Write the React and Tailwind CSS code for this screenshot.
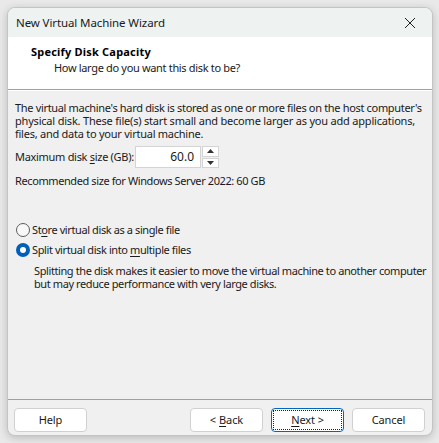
import React from "react";

const font = { fontFamily: '"Noto Sans", "Liberation Sans", sans-serif' };

function Btn({ children, focused }) {
  return (
    <div
      className={`w-[73px] h-[24px] rounded-[4px] bg-white flex items-center justify-center text-[11px] tracking-[-0.1px] text-[#1a1a1a] ${
        focused ? "border border-[#0067c0]" : "border border-[#d0d0d0]"
      }`}
    >
      {focused ? (
        <div className="w-[69px] h-[20px] border border-dotted border-[#222] flex items-center justify-center">
          {children}
        </div>
      ) : (
        children
      )}
    </div>
  );
}

function Radio({ checked }) {
  return checked ? (
    <div className="w-[14px] h-[14px] rounded-full bg-[#005fb8] flex items-center justify-center">
      <div className="w-[6px] h-[6px] rounded-full bg-white" />
    </div>
  ) : (
    <div className="w-[14px] h-[14px] rounded-full border border-[#5c5c5c] bg-[#f8f8f8]" />
  );
}

export default function App() {
  return (
    <div className="w-[439px] h-[443px] bg-[#e9e9e9] pt-[7px] pl-[7px]" style={font}>
      <div className="w-[426px] h-[429px] rounded-[8px] bg-[#f0f0f0] border border-[#c4c4c4] shadow-[0_2px_8px_rgba(0,0,0,0.2)] overflow-hidden flex flex-col">
        {/* Title bar */}
        <div className="h-[29px] bg-[#eef2f1] flex items-center justify-between pl-[8px] pr-[16px] shrink-0">
          <span className="text-[11.5px] tracking-[-0.1px] text-[#1a1a1a]">New Virtual Machine Wizard</span>
          <svg width="12" height="12" viewBox="0 0 12 12">
            <path d="M1 1 L11 11 M11 1 L1 11" stroke="#222" strokeWidth="1" />
          </svg>
        </div>

        {/* Header */}
        <div className="h-[53px] bg-white border-b border-[#a0a0a0] shrink-0 pl-[23px] pt-[7px] text-[11px]">
          <div className="font-bold text-black leading-[16px] tracking-[0.2px]">Specify Disk Capacity</div>
          <div className="text-[#1a1a1a] leading-[16px] pl-[23px] tracking-[-0.33px]">
            How large do you want this disk to be?
          </div>
        </div>

        {/* Body */}
        <div className="flex-1 px-[7px] pt-[10px] text-[11px] tracking-[-0.4px] text-[#1a1a1a] border-t border-white whitespace-nowrap">
          <p className="leading-[13px]">
            <span className="tracking-[-0.33px]">
              The virtual machine's hard disk is stored as one or more files on the host computer's
            </span>
            <br />
            <span className="tracking-[-0.2px]">
              physical disk. These file(s) start small and become larger as you add applications,
            </span>
            <br />
            <span className="tracking-[-0.25px]">files, and data to your virtual machine.</span>
          </p>
          <div className="flex items-center mt-[6px] h-[22px]">
            <span className="w-[120px] shrink-0 tracking-[-0.3px]">
              Maximum disk <span className="underline underline-offset-2">s</span>ize (GB):
            </span>
            <div className="w-[66px] h-[22px] bg-white border border-[#d4d4d4] flex items-center justify-end pr-[6px] text-[12px] tracking-normal">
              60.0
            </div>
            <div className="w-[17px] h-[22px] flex flex-col gap-[1px] ml-[1px]">
              <div className="flex-1 bg-white border border-[#d4d4d4] flex items-center justify-center">
                <svg width="7" height="4" viewBox="0 0 7 4"><path d="M0 4 L3.5 0 L7 4 Z" fill="#333" /></svg>
              </div>
              <div className="flex-1 bg-white border border-[#d4d4d4] flex items-center justify-center">
                <svg width="7" height="4" viewBox="0 0 7 4"><path d="M0 0 L3.5 4 L7 0 Z" fill="#333" /></svg>
              </div>
            </div>
          </div>
          <p className="mt-[6px] leading-[13px]">Recommended size for Windows Server 2022: 60 GB</p>

          <div className="mt-[36px] flex items-center gap-[2px] h-[14px] pl-[1px]">
            <Radio />
            <span>
              St<span className="underline underline-offset-2">o</span>re virtual disk as a single file
            </span>
          </div>
          <div className="mt-[6px] flex items-center gap-[2px] h-[14px] pl-[1px]">
            <Radio checked />
            <span>
              Split virtual disk into <span className="underline underline-offset-2">m</span>ultiple files
            </span>
          </div>
          <p className="mt-[7px] pl-[19px] leading-[13px]">
            Splitting the disk makes it easier to move the virtual machine to another computer
            <br />
            but may reduce performance with very large disks.
          </p>
        </div>

        {/* Footer */}
        <div className="h-[36px] border-t border-[#a0a0a0] shrink-0 flex items-start pt-[8px] pl-[6px] pr-[7px]">
          <Btn>Help</Btn>
          <div className="flex-1" />
          <div className="flex gap-[8px]">
            <Btn>
              &lt; <span className="underline underline-offset-2 ml-[3px]">B</span>ack
            </Btn>
            <Btn focused>
              <span className="underline underline-offset-2">N</span>ext &gt;
            </Btn>
            <Btn>Cancel</Btn>
          </div>
        </div>
      </div>
    </div>
  );
}
